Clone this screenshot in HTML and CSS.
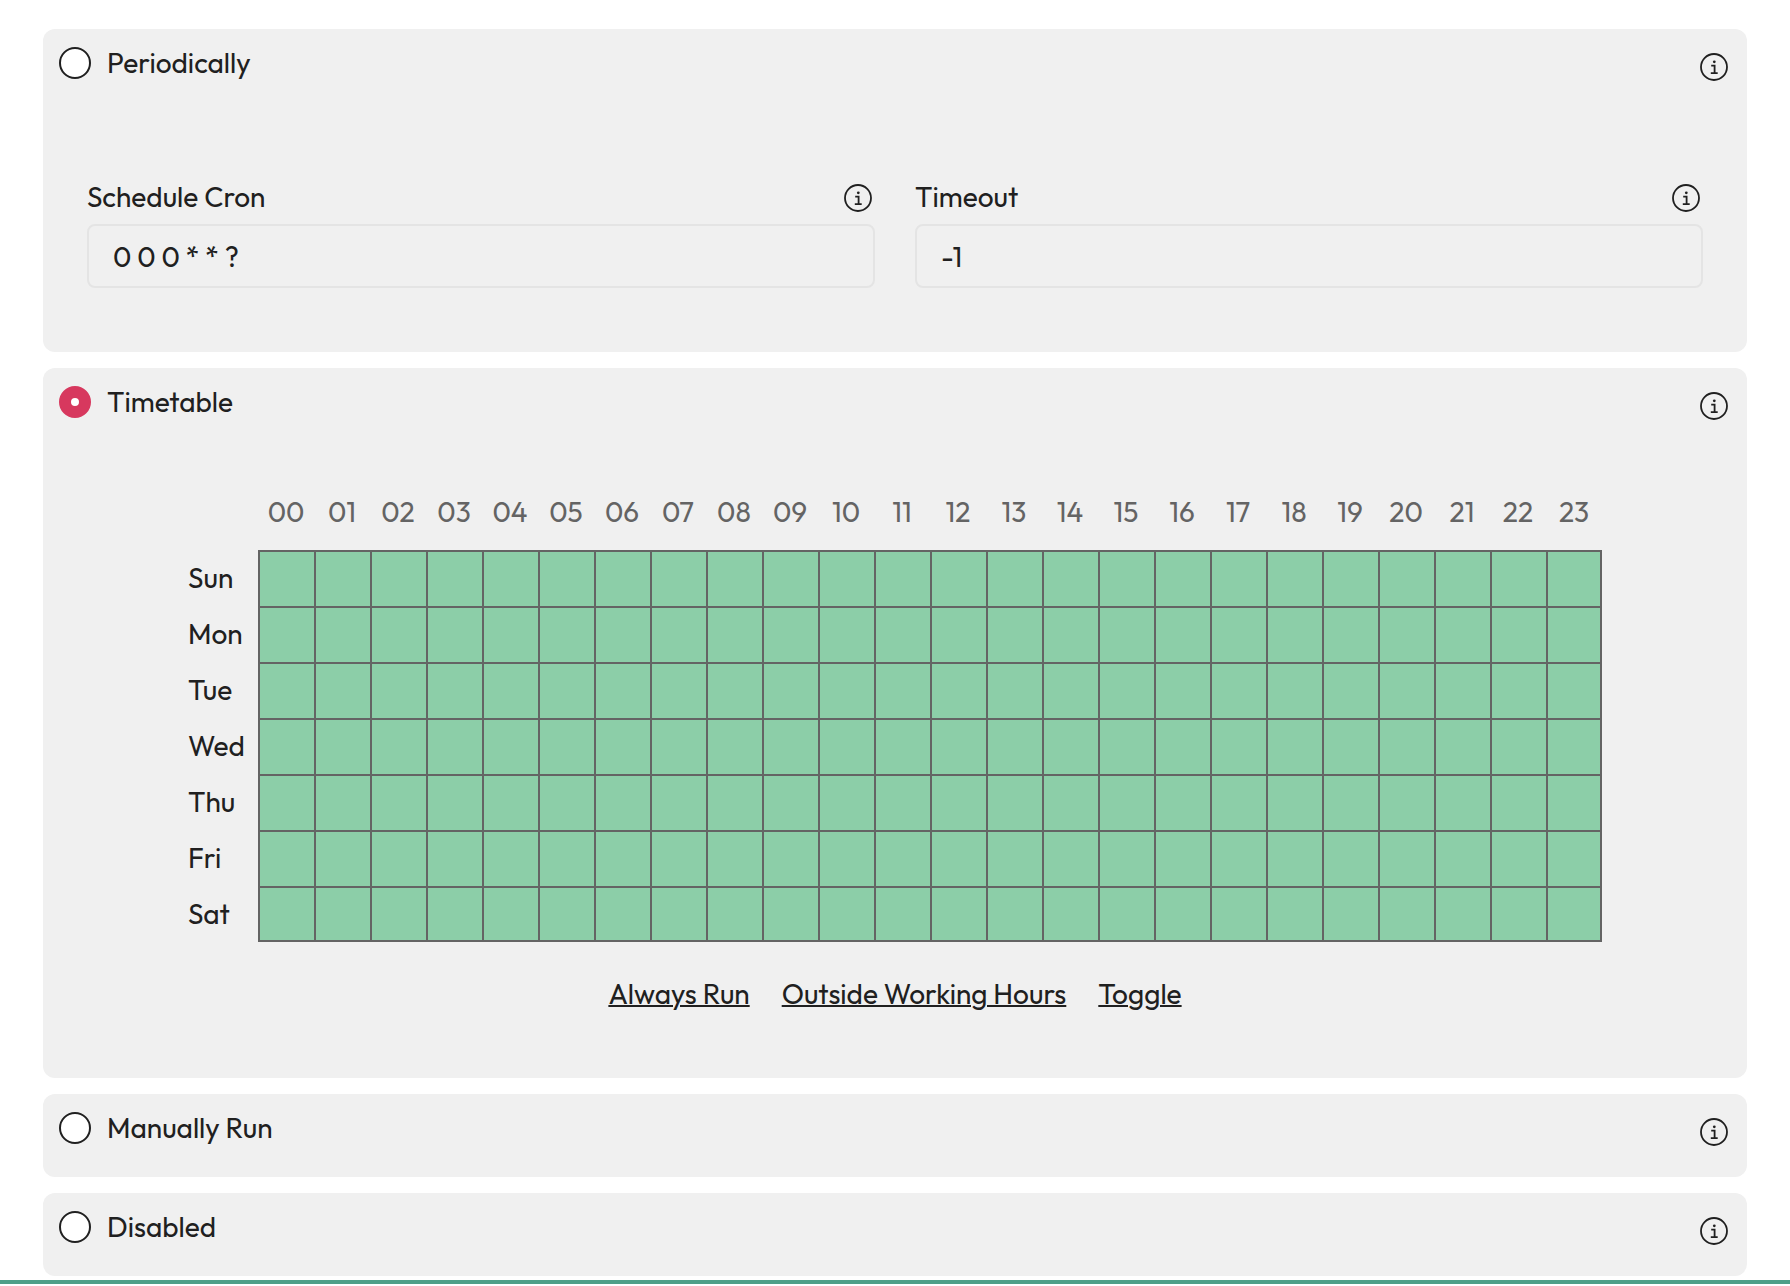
FILE: index.html
```html
<!DOCTYPE html>
<html lang="en">
<head>
  <meta charset="UTF-8">
  <meta name="viewport" content="width=device-width, initial-scale=1">
  <title>Schedule</title>
  <link rel="stylesheet" href="styles.css">
</head>
<body>
  <svg class="sprite" aria-hidden="true">
    <symbol id="icon-info" viewBox="0 0 28 28">
      <circle cx="14" cy="14" r="13" fill="none" stroke="currentColor" stroke-width="1.8"/>
      <circle cx="14.3" cy="8.8" r="1.4" fill="currentColor"/>
      <path d="M11.2 12.7h3.4v7.5M10.8 20.2h6.9" fill="none" stroke="currentColor" stroke-width="1.8"/>
    </symbol>
  </svg>

  <form class="schedule">
    <!-- Periodically -->
    <section class="card">
      <div class="card-header">
        <label class="option"><input type="radio" name="mode" value="periodically">Periodically</label>
        <button type="button" class="info" aria-label="Info"><svg><use href="#icon-info"/></svg></button>
      </div>
      <div class="fields">
        <div class="field">
          <div class="field-header">
            <label for="cron">Schedule Cron</label>
            <button type="button" class="info" aria-label="Info"><svg><use href="#icon-info"/></svg></button>
          </div>
          <input type="text" id="cron" value="0 0 0 * * ?">
        </div>
        <div class="field">
          <div class="field-header">
            <label for="timeout">Timeout</label>
            <button type="button" class="info" aria-label="Info"><svg><use href="#icon-info"/></svg></button>
          </div>
          <input type="text" id="timeout" value="-1">
        </div>
      </div>
    </section>

    <!-- Timetable -->
    <section class="card">
      <div class="card-header">
        <label class="option"><input type="radio" name="mode" value="timetable" checked>Timetable</label>
        <button type="button" class="info" aria-label="Info"><svg><use href="#icon-info"/></svg></button>
      </div>
      <div class="timetable">
        <table>
          <thead><tr id="hours"><td></td></tr></thead>
          <tbody id="days"></tbody>
        </table>
        <nav class="presets">
          <a href="#" id="always">Always Run</a>
          <a href="#" id="outside">Outside Working Hours</a>
          <a href="#" id="toggle">Toggle</a>
        </nav>
      </div>
    </section>

    <!-- Manually Run -->
    <section class="card">
      <div class="card-header">
        <label class="option"><input type="radio" name="mode" value="manual">Manually Run</label>
        <button type="button" class="info" aria-label="Info"><svg><use href="#icon-info"/></svg></button>
      </div>
    </section>

    <!-- Disabled -->
    <section class="card">
      <div class="card-header">
        <label class="option"><input type="radio" name="mode" value="disabled">Disabled</label>
        <button type="button" class="info" aria-label="Info"><svg><use href="#icon-info"/></svg></button>
      </div>
    </section>
  </form>
  <div class="bottom-line"></div>

  <script src="script.js"></script>
</body>
</html>
```
FILE: styles.css
```css
* {
  box-sizing: border-box;
}

body {
  margin: 0;
  background: #fff;
  color: #202020;
  font-family: Outfit, Lato, sans-serif;
  font-size: 28px;
  line-height: 36px;
}

button, input {
  font: inherit;
  color: inherit;
}

.sprite {
  display: none;
}

.schedule {
  display: flex;
  flex-direction: column;
  gap: 16px;
  padding: 29px 43px 4px;
}

.card {
  padding: 18px 16px 32px;
  border-radius: 12px;
  background: #f0f0f0;
}

.card-header {
  display: flex;
  align-items: flex-start;
  justify-content: space-between;
  height: 33px;
  padding-right: 3px;
}

.option {
  display: flex;
  align-items: center;
  gap: 16px;
  height: 32px;
  cursor: pointer;
}

.option input {
  appearance: none;
  width: 32px;
  height: 32px;
  margin: 0;
  border: 2px solid #202020;
  border-radius: 50%;
  background: #fff;
}

.option input:checked {
  border: 12px solid #d7385e;
}

.info {
  width: 28px;
  height: 28px;
  padding: 0;
  border: 0;
  background: none;
  cursor: pointer;
}

.info svg {
  display: block;
  width: 28px;
  height: 28px;
}

.card-header .info {
  margin-top: 6px;
}

.fields {
  display: grid;
  grid-template-columns: 1fr 1fr;
  gap: 40px;
  padding: 104px 28px 32px;
}

.field-header {
  display: flex;
  align-items: center;
  justify-content: space-between;
  height: 28px;
  margin-bottom: 12px;
  padding-right: 3px;
}

.field-header label {
  padding-bottom: 2px;
}

.field input {
  display: block;
  width: 100%;
  height: 64px;
  padding: 0 24px;
  border: 2px solid #e4e4e4;
  border-radius: 8px;
  background: none;
}

.timetable {
  display: flex;
  flex-direction: column;
  align-items: center;
  gap: 34px;
  padding: 75px 0 34px;
}

table {
  border-spacing: 0;
}

th, td {
  padding: 0;
  font-weight: normal;
}

thead th {
  width: 56px;
  height: 56px;
  color: #646464;
  vertical-align: top;
}

tbody th {
  width: 70px;
  text-align: left;
}

tbody td {
  width: 56px;
  height: 56px;
  border-top: 2px solid #646464;
  border-left: 2px solid #646464;
}

tbody td:last-child {
  border-right: 2px solid #646464;
}

tbody tr:last-child td {
  border-bottom: 2px solid #646464;
}

.slot {
  display: block;
  width: 100%;
  height: 54px;
  padding: 0;
  border: 0;
  background: #fff;
  cursor: pointer;
}

tbody tr:last-child .slot {
  height: 52px;
}

.slot.on {
  background: #8ccea8;
}

.presets {
  display: flex;
  gap: 32px;
}

.presets a {
  color: inherit;
  text-decoration-thickness: 2px;
}

.bottom-line {
  height: 4px;
  background: #4e9f88;
}
```
FILE: script.js
```js
const days = ['Sun', 'Mon', 'Tue', 'Wed', 'Thu', 'Fri', 'Sat'];
const hoursRow = document.getElementById('hours');
const daysBody = document.getElementById('days');
const slots = [];

for (let h = 0; h < 24; h++) {
  const th = document.createElement('th');
  th.scope = 'col';
  th.textContent = String(h).padStart(2, '0');
  hoursRow.appendChild(th);
}

days.forEach((day, d) => {
  const row = daysBody.insertRow();
  const th = document.createElement('th');
  th.scope = 'row';
  th.textContent = day;
  row.appendChild(th);
  for (let h = 0; h < 24; h++) {
    const btn = document.createElement('button');
    btn.type = 'button';
    btn.className = 'slot on';
    btn.setAttribute('aria-label', `${day} ${h}:00`);
    btn.onclick = () => btn.classList.toggle('on');
    row.insertCell().appendChild(btn);
    slots.push({ btn, d, h });
  }
});

function preset(id, isOn) {
  document.getElementById(id).onclick = (e) => {
    e.preventDefault();
    slots.forEach((s) => s.btn.classList.toggle('on', isOn(s)));
  };
}

preset('always', () => true);
preset('outside', (s) => s.d === 0 || s.d === 6 || s.h < 9 || s.h >= 17);
preset('toggle', (s) => !s.btn.classList.contains('on'));
```
